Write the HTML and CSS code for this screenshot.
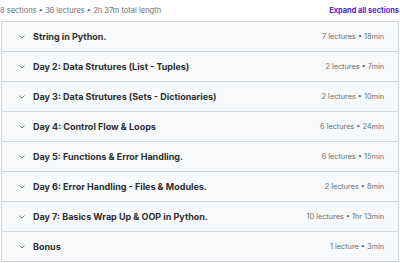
FILE: index.html
```html
<!DOCTYPE html>
<html lang="en">
<head>
  <meta charset="UTF-8" />
  <meta name="viewport" content="width=device-width, initial-scale=1.0" />
  <title>Course content</title>
  <link rel="stylesheet" href="styles.css">
</head>
<body>
  <div class="content">
    <div class="summary">
      <span class="summary-text">8 sections • 36 lectures • 2h 37m total length</span>
      <button class="expand-all">Expand all sections</button>
    </div>
    <div class="sections">
      <div class="section">
        <svg class="chevron" width="6" height="4" viewBox="0 0 6 4"><polyline points="0.5,0.5 3,3 5.5,0.5" /></svg>
        <span class="title">String in Python.</span>
        <span class="meta">7 lectures • 18min</span>
      </div>
      <div class="section">
        <svg class="chevron" width="6" height="4" viewBox="0 0 6 4"><polyline points="0.5,0.5 3,3 5.5,0.5" /></svg>
        <span class="title">Day 2: Data Strutures (List - Tuples)</span>
        <span class="meta">2 lectures • 7min</span>
      </div>
      <div class="section">
        <svg class="chevron" width="6" height="4" viewBox="0 0 6 4"><polyline points="0.5,0.5 3,3 5.5,0.5" /></svg>
        <span class="title">Day 3: Data Strutures (Sets - Dictionaries)</span>
        <span class="meta">2 lectures • 10min</span>
      </div>
      <div class="section">
        <svg class="chevron" width="6" height="4" viewBox="0 0 6 4"><polyline points="0.5,0.5 3,3 5.5,0.5" /></svg>
        <span class="title">Day 4: Control Flow &amp; Loops</span>
        <span class="meta">6 lectures • 24min</span>
      </div>
      <div class="section">
        <svg class="chevron" width="6" height="4" viewBox="0 0 6 4"><polyline points="0.5,0.5 3,3 5.5,0.5" /></svg>
        <span class="title">Day 5: Functions &amp; Error Handling.</span>
        <span class="meta">6 lectures • 15min</span>
      </div>
      <div class="section">
        <svg class="chevron" width="6" height="4" viewBox="0 0 6 4"><polyline points="0.5,0.5 3,3 5.5,0.5" /></svg>
        <span class="title">Day 6: Error Handling - Files &amp; Modules.</span>
        <span class="meta">2 lectures • 8min</span>
      </div>
      <div class="section">
        <svg class="chevron" width="6" height="4" viewBox="0 0 6 4"><polyline points="0.5,0.5 3,3 5.5,0.5" /></svg>
        <span class="title">Day 7: Basics Wrap Up &amp; OOP in Python.</span>
        <span class="meta">10 lectures • 1hr 13min</span>
      </div>
      <div class="section">
        <svg class="chevron" width="6" height="4" viewBox="0 0 6 4"><polyline points="0.5,0.5 3,3 5.5,0.5" /></svg>
        <span class="title">Bonus</span>
        <span class="meta">1 lecture • 3min</span>
      </div>
    </div>
  </div>
</body>
</html>
```

FILE: styles.css
```css
body {
  margin: 0;
  background: #ffffff;
  font-family: Inter, "Liberation Sans", sans-serif;
  color: #2d2f31;
}
.content {
  width: 398px;
  margin-left: 1px;
}
.summary {
  height: 21px;
  display: flex;
  align-items: center;
  justify-content: space-between;
}
.summary-text {
  margin-left: -1px;
  font-size: 7.5px;
  color: #6a6f73;
}
.expand-all {
  border: none;
  background: none;
  padding: 0;
  font-family: inherit;
  font-size: 7.4px;
  font-weight: 700;
  color: #5624d0;
  cursor: pointer;
}
.sections {
  border: 1px solid #d1d7dc;
}
.section {
  height: 29px;
  display: flex;
  align-items: center;
  padding: 0 14px 0 17px;
  background: #f7f9fa;
  border-bottom: 1px solid #d1d7dc;
}
.section:last-child {
  border-bottom: none;
}
.chevron {
  flex: none;
  margin-right: 8px;
  fill: none;
  stroke: #6a6f73;
  stroke-width: 0.9;
}
.title {
  flex: 1;
  font-size: 9px;
  font-weight: 700;
  color: #2d2f31;
}
.meta {
  font-size: 7.3px;
  color: #6a6f73;
}
```
